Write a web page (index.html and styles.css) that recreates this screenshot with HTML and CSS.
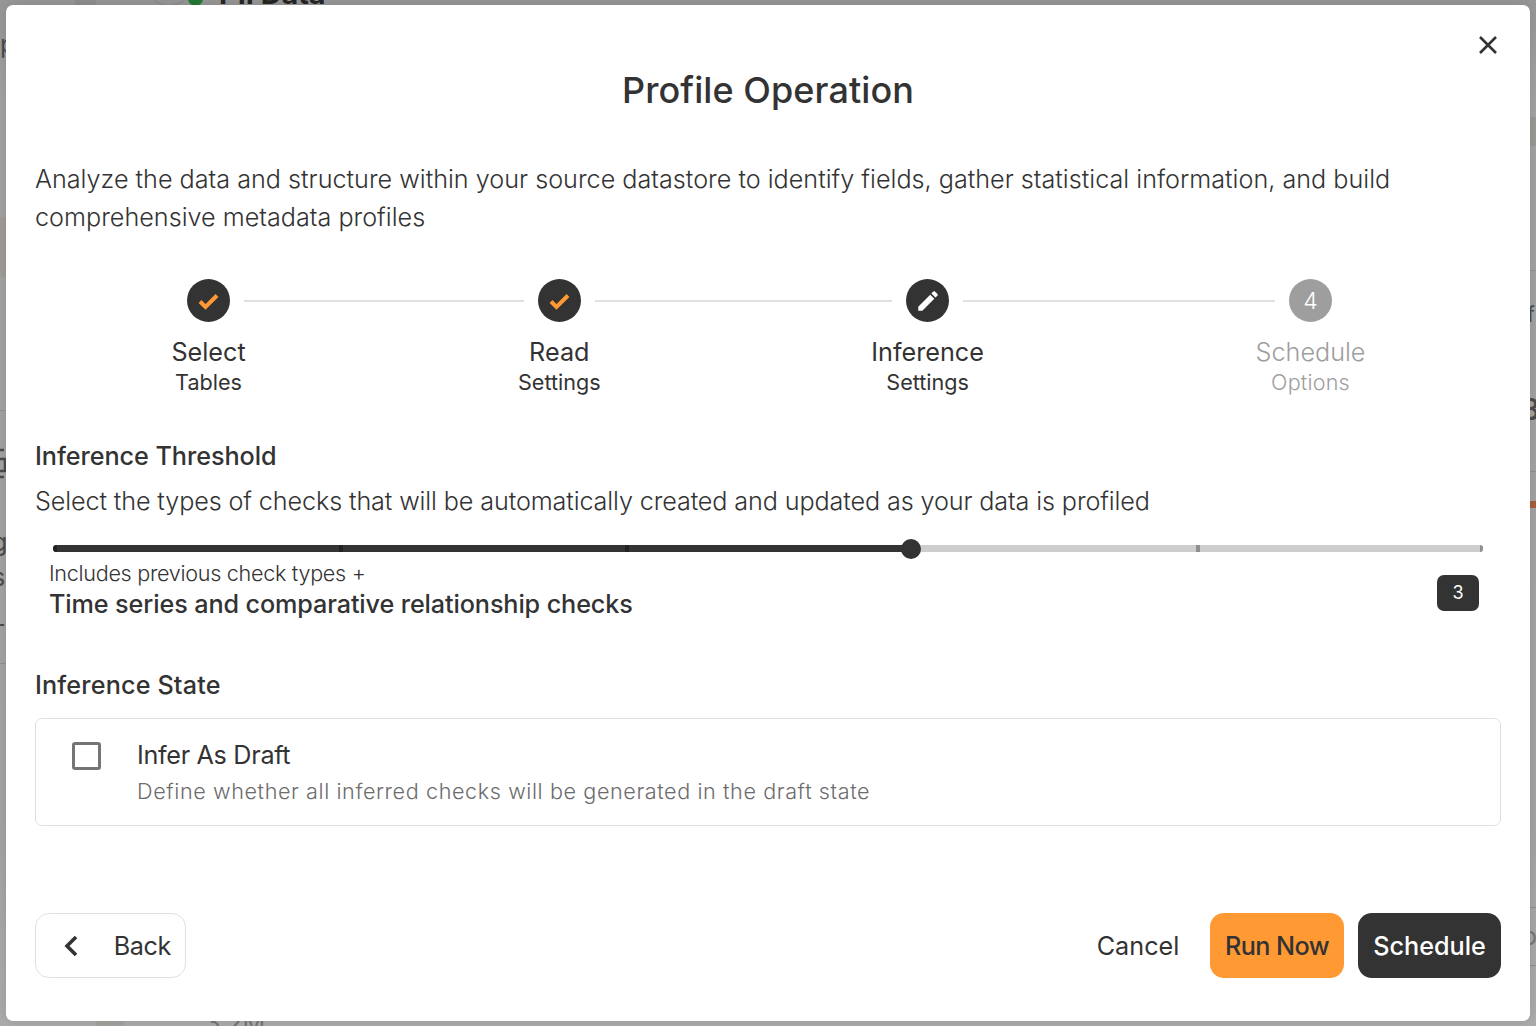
FILE: index.html
```html
<!DOCTYPE html>
<html lang="en">
<head>
  <meta charset="UTF-8">
  <meta name="viewport" content="width=device-width, initial-scale=1.0">
  <title>Profile Operation</title>
  <link rel="stylesheet" href="styles.css">
</head>
<body>

<!-- Page behind the dialog -->
<div class="page-behind" aria-hidden="true">
  <span class="bg-block bg-top"></span>
  <span class="bg-ring"></span>
  <span class="bg-dot"></span>
  <span class="bg-text bg-title">PII Data</span>
  <span class="bg-text bg-p">p</span>
  <span class="bg-block bg-left"></span>
  <svg class="bg-icon" width="6" height="34" viewBox="0 0 6 34"><path d="M0 3H4M0 12H5V24H0M0 30H4"/></svg>
  <span class="bg-text bg-g">g</span>
  <span class="bg-text bg-s">s</span>
  <span class="bg-text bg-l">L</span>
  <span class="bg-line line-a"></span>
  <span class="bg-line line-b"></span>
  <span class="bg-line line-c"></span>
  <span class="bg-line line-d"></span>
  <span class="bg-line line-e"></span>
  <span class="bg-line line-f"></span>
  <span class="bg-block bg-right"></span>
  <span class="bg-text bg-f">f</span>
  <span class="bg-text bg-8">8</span>
  <span class="bg-accent"></span>
  <span class="bg-text bg-o">o</span>
  <span class="bg-block bg-bottom"></span>
  <span class="bg-text bg-count">3.2M</span>
</div>

<div class="dialog" role="dialog">
  <header class="dialog-header">
    <button class="close" aria-label="Close">
      <svg width="18" height="18" viewBox="0 0 18 18"><path d="M1 1L17 17M17 1L1 17"/></svg>
    </button>
    <h1>Profile Operation</h1>
  </header>

  <p class="description">Analyze the data and structure within your source datastore to identify fields, gather statistical information, and build<br>comprehensive metadata profiles</p>

  <!-- Stepper -->
  <div class="stepper">
    <div class="step">
      <div class="step-circle">
        <svg class="check" width="21" height="17" viewBox="0 0 21 17"><path d="M2 8.500L7.500 14L19 2.500"/></svg>
      </div>
      <span class="step-title">Select</span>
      <span class="step-sub">Tables</span>
    </div>
    <span class="step-line line-one"></span>
    <div class="step">
      <div class="step-circle">
        <svg class="check" width="21" height="17" viewBox="0 0 21 17"><path d="M2 8.500L7.500 14L19 2.500"/></svg>
      </div>
      <span class="step-title">Read</span>
      <span class="step-sub">Settings</span>
    </div>
    <span class="step-line line-two"></span>
    <div class="step">
      <div class="step-circle">
        <svg class="pencil" width="26" height="26" viewBox="0 0 24 24"><path d="M20.710 7.040c.390-.390.390-1.040 0-1.410l-2.340-2.340c-.370-.390-1.020-.390-1.410 0l-1.840 1.830 3.750 3.750M3 17.250V21h3.750L17.810 9.930l-3.750-3.750z"/></svg>
      </div>
      <span class="step-title">Inference</span>
      <span class="step-sub">Settings</span>
    </div>
    <span class="step-line line-three"></span>
    <div class="step disabled">
      <div class="step-circle">4</div>
      <span class="step-title">Schedule</span>
      <span class="step-sub">Options</span>
    </div>
  </div>

  <!-- Inference threshold -->
  <section class="threshold">
    <h2>Inference Threshold</h2>
    <p class="hint">Select the types of checks that will be automatically created and updated as your data is profiled</p>
    <div class="slider">
      <span class="tick dark"></span>
      <span class="tick dark"></span>
      <span class="tick dark"></span>
      <span class="tick dark"></span>
      <span class="tick"></span>
      <span class="tick"></span>
      <span class="thumb"></span>
    </div>
    <div class="slider-info">
      <div>
        <p class="previous">Includes previous check types +</p>
        <p class="level">Time series and comparative relationship checks</p>
      </div>
      <span class="badge">3</span>
    </div>
  </section>

  <!-- Inference state -->
  <section class="state">
    <h2>Inference State</h2>
    <div class="option-card">
      <span class="checkbox"></span>
      <div>
        <p class="option-title">Infer As Draft</p>
        <p class="option-text">Define whether all inferred checks will be generated in the draft state</p>
      </div>
    </div>
  </section>

  <footer class="actions">
    <button class="btn back">
      <svg width="14" height="22" viewBox="0 0 14 22"><path d="M12 2L3 11l9 9"/></svg>
      <span>Back</span>
    </button>
    <button class="btn cancel">Cancel</button>
    <button class="btn run">Run Now</button>
    <button class="btn schedule">Schedule</button>
  </footer>
</div>

</body>
</html>
```
FILE: styles.css
```css
* {
  box-sizing: border-box;
}

body {
  margin: 0;
  width: 1536px;
  height: 1026px;
  overflow: hidden;
  position: relative;
  font-family: Inter, "Open Sans", sans-serif;
  font-size: 25.2px;
  color: #333;
}

h1, h2, p {
  margin: 0;
  white-space: nowrap;
}

button {
  font: inherit;
  color: inherit;
  border: none;
  background: none;
  padding: 0;
}

svg {
  display: block;
}

/* page behind the dialog */
.page-behind {
  position: absolute;
  inset: 0;
  overflow: hidden;
  background: linear-gradient(#979797, #a3a3a3 10%, #a4a4a4 80%, #acacac);
}

.page-behind span,
.bg-icon {
  position: absolute;
}

.bg-block { background: #a09d98; }
.bg-top { left: 75px; top: 0; width: 21px; height: 6px; background: #8e8e8e; }
.bg-left { left: 0; top: 217px; width: 8px; height: 60px; }
.bg-right { left: 1529px; top: 117px; width: 7px; height: 29px; background: #9b9994; }
.bg-bottom { left: 96px; top: 1020px; width: 28px; height: 6px; background: #a5a3a0; }
.bg-ring {
  left: 145px;
  top: -42px;
  width: 48px;
  height: 48px;
  border: 1px solid #888;
  border-radius: 50%;
}
.bg-dot {
  left: 188px;
  top: -9px;
  width: 15px;
  height: 15px;
  border-radius: 50%;
  background: #247a33;
}
.bg-icon {
  left: 0;
  top: 447px;
  fill: none;
  stroke: #4c4c4c;
  stroke-width: 2.500;
}
.bg-text { line-height: 30px; color: #4c4c4c; }
.bg-title { left: 219px; top: -21px; font-weight: 700; font-size: 28.800px; color: #262626; }
.bg-p { left: 0; top: 29px; }
.bg-g { left: -8px; top: 527px; }
.bg-s { left: -8px; top: 562px; }
.bg-l { left: -9px; top: 602px; }
.bg-f { left: 1527px; top: 300px; font-size: 21px; }
.bg-8 { left: 1521px; top: 394px; font-weight: 600; font-size: 30px; }
.bg-o { left: 1522px; top: 921px; color: #777; }
.bg-count { left: 205px; top: 1008px; font-size: 25.200px; color: #777; }
.bg-accent { left: 1530px; top: 501px; width: 6px; height: 7px; background: #a65f3c; }
.bg-line { left: 0; width: 6px; height: 1px; background: #919191; }
.line-a { top: 410px; }
.line-b { top: 663px; }
.line-c { top: 270px; left: 1530px; }
.line-d { top: 471px; left: 1530px; }
.line-e { top: 907px; left: 1530px; }
.line-f { top: 965px; left: 1530px; }

/* dialog */
.dialog {
  position: relative;
  display: flex;
  flex-direction: column;
  width: 1524px;
  height: 1016px;
  margin: 5px 6px;
  padding: 31px 29px 43px;
  background: #fff;
  border-radius: 7px;
  box-shadow: 0 0 14px rgba(0, 0, 0, 0.12);
}

.dialog-header {
  display: flex;
  flex-direction: column;
  height: 124px;
}

.close {
  align-self: flex-end;
  margin-right: 4px;
}

.close svg path {
  fill: none;
  stroke: #333;
  stroke-width: 2.600;
}

h1 {
  margin-top: 12px;
  text-align: center;
  font-size: 36px;
  line-height: 48px;
  font-weight: 500;
  letter-spacing: 0.080px;
}

.description {
  line-height: 38px;
  font-weight: 300;
}

/* stepper */
.stepper {
  display: flex;
  align-items: flex-start;
  height: 122px;
  margin-top: 43px;
  padding: 0 169px 0 152px;
}

.step {
  display: flex;
  flex-direction: column;
  align-items: center;
  flex: 0 0 43px;
  width: 43px;
  white-space: nowrap;
}

.step-circle {
  display: flex;
  flex: none;
  align-items: center;
  justify-content: center;
  width: 43px;
  height: 43px;
  margin-bottom: 14px;
  border-radius: 50%;
  background: #333;
  color: #fff;
  font-size: 23px;
  font-weight: 300;
}

.check {
  margin-top: 1px;
  fill: none;
  stroke: #ff9933;
  stroke-width: 4;
}

.pencil {
  fill: #fff;
}

.step-title {
  line-height: 33px;
}

.step-sub {
  font-size: 21.600px;
  line-height: 27px;
}

.disabled .step-circle {
  background: #9e9e9e;
}

.disabled .step-title,
.disabled .step-sub {
  color: #9e9e9e;
  font-weight: 300;
}

.disabled .step-sub {
  letter-spacing: 0.200px;
}

.step-line {
  height: 2px;
  margin: 21px 14px 0;
  background: #e0e0e0;
}

.line-one { flex: 279; }
.line-two { flex: 296.500; }
.line-three { flex: 311; }

/* threshold */
.threshold {
  margin-top: 38px;
}

h2 {
  font-size: 25.200px;
  line-height: 34px;
  font-weight: 500;
  letter-spacing: -0.050px;
}

.hint {
  margin-top: 11px;
  line-height: 34px;
  font-weight: 300;
  letter-spacing: -0.122px;
}

.slider {
  position: relative;
  display: flex;
  justify-content: space-between;
  height: 7px;
  margin: 27px 18px 0;
  border-radius: 4px;
  background: linear-gradient(to right, #333 60%, #cdcdcd 60%);
}

.tick {
  width: 4px;
  height: 7px;
  background: #8f8f8f;
}

.tick.dark { background: #222; }
.tick:first-child { border-radius: 4px 0 0 4px; }
.tick:nth-child(2) { margin-left: 2px; }
.tick:nth-child(3) { margin-left: 2px; }
.tick:nth-child(5) { margin-left: 3px; }
.tick:nth-child(6) { width: 3px; border-radius: 0 4px 4px 0; }

.thumb {
  position: absolute;
  left: 60%;
  top: -6px;
  width: 20px;
  height: 20px;
  margin-left: -10px;
  border-radius: 50%;
  background: #333;
}

.slider-info {
  display: flex;
  justify-content: space-between;
  height: 69px;
  padding: 7px 22px 0 14px;
}

.previous {
  font-size: 21.600px;
  line-height: 28px;
  font-weight: 300;
  letter-spacing: -0.300px;
}

.level {
  line-height: 34px;
  font-weight: 500;
  letter-spacing: -0.110px;
}

.badge {
  width: 42px;
  height: 36px;
  margin-top: 16px;
  border-radius: 7px;
  background: #333;
  color: #fff;
  font-size: 18px;
  line-height: 36px;
  text-align: center;
}

/* state */
.state {
  margin-top: 47px;
}

.state h2 {
  letter-spacing: 0.150px;
}

.option-card {
  display: flex;
  height: 108px;
  margin-top: 16px;
  padding: 19px 36px;
  border: 1px solid #e0e0e0;
  border-radius: 7px;
}

.checkbox {
  width: 29px;
  height: 28px;
  margin: 4px 36px 0 0;
  border: 3px solid #757575;
  border-radius: 3px;
}

.option-title {
  line-height: 34px;
  letter-spacing: -0.320px;
}

.option-text {
  margin-top: 4px;
  font-size: 21.600px;
  line-height: 30px;
  font-weight: 300;
  letter-spacing: 0.595px;
  color: #6c6c6c;
}

/* footer */
.actions {
  display: flex;
  align-items: center;
  margin-top: auto;
}

.btn {
  display: flex;
  align-items: center;
  justify-content: center;
  height: 65px;
  border-radius: 14px;
  white-space: nowrap;
}

.back {
  width: 151px;
  justify-content: space-between;
  padding: 0 14px 0 28px;
  margin-right: auto;
  border: 1px solid #e0e0e0;
  letter-spacing: -0.400px;
}

.back svg path {
  fill: none;
  stroke: #333;
  stroke-width: 3.600;
}

.cancel {
  width: 82px;
  margin-right: 31px;
}

.run {
  width: 134px;
  margin-right: 14px;
  background: #ff9933;
  font-weight: 500;
  letter-spacing: -0.550px;
}

.schedule {
  width: 143px;
  background: #333;
  color: #fff;
  font-weight: 500;
}
```
